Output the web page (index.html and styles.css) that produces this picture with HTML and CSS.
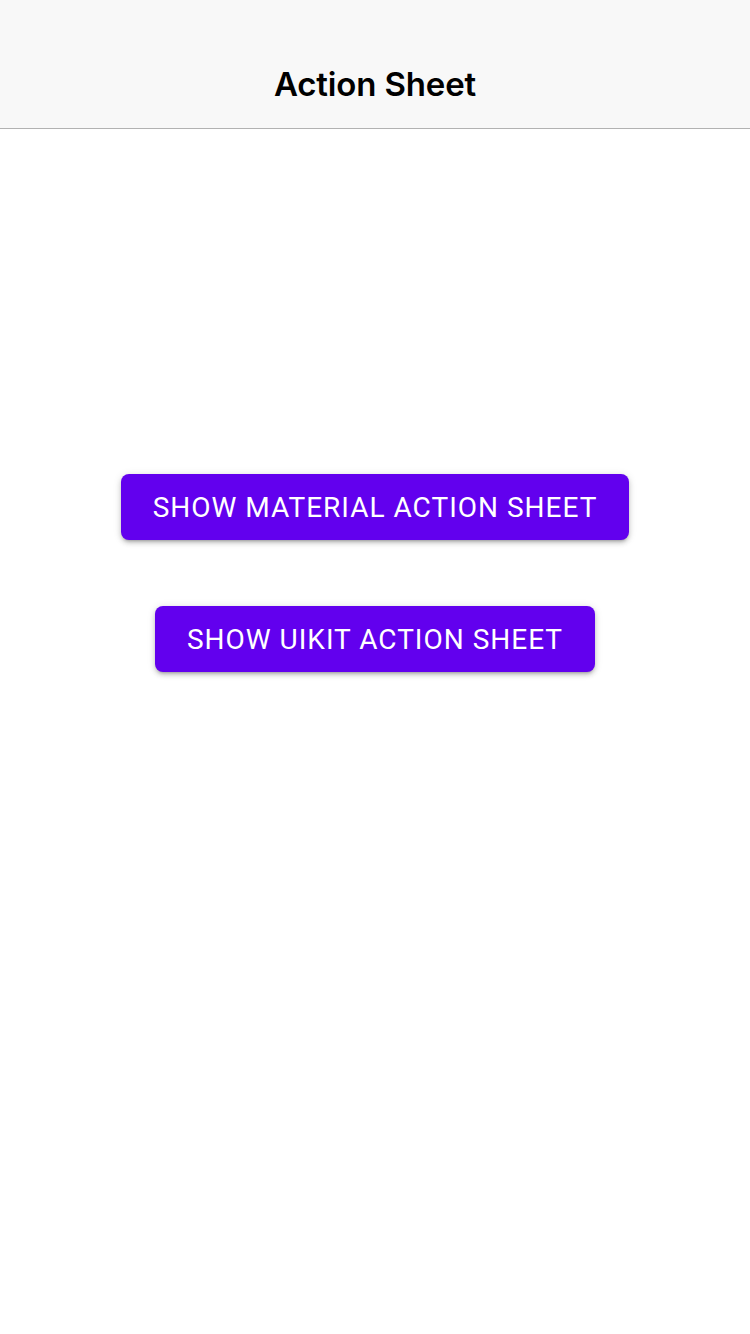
FILE: index.html
```html
<!DOCTYPE html>
<html>
<head>
<meta charset="utf-8">
<link rel="stylesheet" href="styles.css">
</head>
<body>
<header class="navbar"><h1 class="title">Action Sheet</h1></header>
<main class="content">
  <button class="btn">SHOW MATERIAL ACTION SHEET</button>
  <button class="btn">SHOW UIKIT ACTION SHEET</button>
</main>
</body>
</html>
```
FILE: styles.css
```css
html, body { margin: 0; padding: 0; background: #fff; }
body { width: 750px; height: 1334px; overflow: hidden; }
.navbar {
  height: 128px;
  background: #f8f8f8;
  border-bottom: 1px solid #b2b2b2;
  display: flex;
  align-items: flex-end;
  justify-content: center;
}
.title {
  margin: 0 0 24px;
  font-family: Inter, "Liberation Sans", sans-serif;
  font-weight: 600;
  font-size: 33px;
  line-height: 40px;
  color: #000;
  letter-spacing: -0.15px;
}
.content {
  display: flex;
  flex-direction: column;
  align-items: center;
  padding-top: 345px;
  gap: 66px;
}
.btn {
  height: 66px;
  padding: 0 32px;
  border: none;
  border-radius: 8px;
  background: #6200ee;
  color: #fff;
  font-family: Roboto, "Liberation Sans", sans-serif;
  font-size: 28px;
  font-weight: 400;
  letter-spacing: 1px;
  box-shadow: 0 3px 3px -2px rgba(0,0,0,0.22), 0 3px 5px 0 rgba(0,0,0,0.16), 0 1px 8px 0 rgba(0,0,0,0.12);
}
```
